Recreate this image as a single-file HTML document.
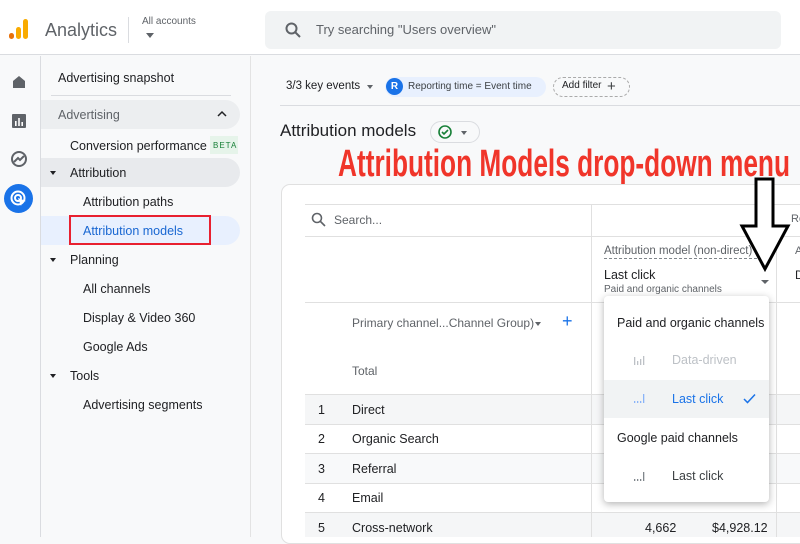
<!DOCTYPE html>
<html><head><meta charset="utf-8"><style>
*{box-sizing:border-box;margin:0;padding:0}
body{width:800px;height:537px;overflow:hidden;background:#f8f9fa;font-family:"Liberation Sans",sans-serif;color:#202124;position:relative}
.a{position:absolute;white-space:nowrap}
.top{position:absolute;left:0;top:0;width:800px;height:55px;background:#fff;border-bottom:1px solid #dadce0}
.rail{position:absolute;left:0;top:56px;width:41px;height:481px;background:#f8f9fa;border-right:1px solid #dadce0}
.side{position:absolute;left:41px;top:56px;width:210px;height:481px;background:#f8f9fa;border-right:1px solid #e3e3e3}
.s{font-size:12.5px;color:#202124}
.card{position:absolute;left:281px;top:184px;width:540px;height:360px;background:#fff;border:1px solid #e0e0e0;border-radius:9px}
.hl{position:absolute;left:305px;width:500px;height:1px;background:#e0e0e0}
.t{font-size:12.5px}
</style></head><body>
<div class="top"></div>
<svg class="a" style="left:9px;top:19px" width="22" height="22"><rect x="0" y="14" width="5" height="6" rx="2.5" fill="#e8710a"/><rect x="7" y="8" width="5" height="12" rx="2.5" fill="#f9ab00"/><rect x="14" y="0" width="5" height="20" rx="2.5" fill="#f9ab00"/></svg>
<div class="a" style="left:45px;top:20px;font-size:18px;color:#5f6368">Analytics</div>
<div class="a" style="left:128px;top:17px;width:1px;height:26px;background:#dadce0"></div>
<div class="a" style="left:142px;top:16px;font-size:10px;color:#5f6368">All accounts</div>
<div class="a" style="left:146px;top:33px;width:0;height:0;border-left:4px solid transparent;border-right:4px solid transparent;border-top:5px solid #5f6368"></div>
<div class="a" style="left:265px;top:11px;width:516px;height:38px;background:#f1f3f4;border-radius:6px"></div>
<svg class="a" style="left:285px;top:22px" width="16" height="16"><circle cx="6.5" cy="6.5" r="5" fill="none" stroke="#5f6368" stroke-width="2"/><line x1="10" y1="10" x2="15" y2="15" stroke="#5f6368" stroke-width="2"/></svg>
<div class="a" style="left:316px;top:22px;font-size:13px;color:#5f6368">Try searching "Users overview"</div>

<div class="rail"></div>
<svg class="a" style="left:11px;top:74px" width="16" height="16"><path d="M2 7 L8 2 L14 7 V14 H2 Z" fill="#5f6368"/></svg>
<svg class="a" style="left:11px;top:113px" width="16" height="16"><rect x="1" y="1" width="14" height="14" rx="1" fill="#5f6368"/><rect x="4" y="8" width="1.6" height="5" fill="#fff"/><rect x="7.2" y="5" width="1.6" height="8" fill="#fff"/><rect x="10.4" y="9" width="1.6" height="4" fill="#fff"/></svg>
<svg class="a" style="left:10px;top:150px" width="18" height="18"><circle cx="9" cy="9" r="7" fill="none" stroke="#5f6368" stroke-width="2"/><path d="M4 12 L8 8 L10 10 L14 6" fill="none" stroke="#5f6368" stroke-width="2"/></svg>
<div class="a" style="left:4px;top:184px;width:29px;height:29px;border-radius:50%;background:#1a73e8"></div>
<svg class="a" style="left:9px;top:189px" width="19" height="19"><circle cx="9" cy="9" r="6.5" fill="none" stroke="#fff" stroke-width="2"/><circle cx="9" cy="9" r="3" fill="none" stroke="#fff" stroke-width="2"/><path d="M9 9 L17 12 L13 13 L12 17 Z" fill="#fff"/></svg>

<div class="side"></div>
<div class="a s" style="left:58px;top:71px">Advertising snapshot</div>
<div class="a" style="left:51px;top:95px;width:180px;height:1px;background:#dadce0"></div>
<div class="a" style="left:41px;top:100px;width:199px;height:29px;background:#eceef0;border-radius:0 15px 15px 0"></div>
<div class="a s" style="left:58px;top:108px;color:#5f6368">Advertising</div>
<svg class="a" style="left:217px;top:110px" width="10" height="8"><path d="M1 6 L5 2 L9 6" fill="none" stroke="#202124" stroke-width="1.5"/></svg>
<div class="a s" style="left:70px;top:139px">Conversion performance</div>
<div class="a" style="left:210px;top:136px;width:28px;height:18px;background:#e6f4ea;color:#188038;font-size:8px;letter-spacing:1px;padding:5px 0 0 3px">BETA</div>
<div class="a" style="left:41px;top:158px;width:199px;height:29px;background:#e8eaed;border-radius:0 15px 15px 0"></div>
<div class="a" style="left:50px;top:171px;border-left:3px solid transparent;border-right:3px solid transparent;border-top:4px solid #202124"></div>
<div class="a s" style="left:70px;top:166px">Attribution</div>
<div class="a s" style="left:83px;top:195px">Attribution paths</div>
<div class="a" style="left:41px;top:216px;width:199px;height:29px;background:#e8f0fe;border-radius:0 15px 15px 0"></div>
<div class="a" style="left:69px;top:215px;width:142px;height:30px;border:2px solid #e8202f"></div>
<div class="a s" style="left:83px;top:224px;color:#1967d2">Attribution models</div>
<div class="a" style="left:50px;top:258px;border-left:3px solid transparent;border-right:3px solid transparent;border-top:4px solid #202124"></div>
<div class="a s" style="left:70px;top:253px">Planning</div>
<div class="a s" style="left:83px;top:282px">All channels</div>
<div class="a s" style="left:83px;top:311px">Display &amp; Video 360</div>
<div class="a s" style="left:83px;top:340px">Google Ads</div>
<div class="a" style="left:50px;top:374px;border-left:3px solid transparent;border-right:3px solid transparent;border-top:4px solid #202124"></div>
<div class="a s" style="left:70px;top:369px">Tools</div>
<div class="a s" style="left:83px;top:398px">Advertising segments</div>

<div class="a" style="left:286px;top:80px;font-size:11.5px">3/3 key events</div>
<div class="a" style="left:367px;top:85px;border-left:3px solid transparent;border-right:3px solid transparent;border-top:4px solid #5f6368"></div>
<div class="a" style="left:385px;top:77px;width:161px;height:20px;background:#e8f0fe;border-radius:10px"></div>
<div class="a" style="left:386px;top:78px;width:17px;height:17px;border-radius:50%;background:#1a73e8;color:#fff;font-size:10px;font-weight:bold;text-align:center;line-height:17px">R</div>
<div class="a" style="left:408px;top:81px;font-size:10px;color:#3c4043">Reporting time = Event time</div>
<div class="a" style="left:553px;top:77px;width:77px;height:20px;border:1px dashed #aaa;border-radius:10px"></div>
<div class="a" style="left:562px;top:80px;font-size:10px">Add filter</div>
<div class="a" style="left:607px;top:78px;font-size:15px;color:#3c4043">+</div>
<div class="a" style="left:280px;top:105px;width:520px;height:1px;background:#dadce0"></div>

<div class="a" style="left:280px;top:121px;font-size:17px">Attribution models</div>
<div class="a" style="left:430px;top:121px;width:50px;height:22px;border:1px solid #dadce0;border-radius:11px"></div>
<svg class="a" style="left:437px;top:124px" width="16" height="16"><circle cx="8" cy="8" r="6" fill="none" stroke="#188038" stroke-width="1.6"/><path d="M5 8 L7 10 L11 6" fill="none" stroke="#188038" stroke-width="1.6"/></svg>
<div class="a" style="left:461px;top:131px;border-left:3px solid transparent;border-right:3px solid transparent;border-top:4px solid #5f6368"></div>

<div class="card"></div>
<div class="hl" style="top:204px;width:500px"></div>
<div class="hl" style="top:236px"></div>
<div class="hl" style="top:302px"></div>
<div class="a" style="left:591px;top:204px;width:1px;height:333px;background:#e0e0e0"></div>
<div class="a" style="left:776px;top:236px;width:1px;height:301px;background:#e0e0e0"></div>
<svg class="a" style="left:311px;top:212px" width="15" height="15"><circle cx="6" cy="6" r="4.5" fill="none" stroke="#5f6368" stroke-width="1.6"/><line x1="9.5" y1="9.5" x2="14" y2="14" stroke="#5f6368" stroke-width="1.6"/></svg>
<div class="a" style="left:334px;top:213px;font-size:12px;color:#5f6368">Search...</div>
<div class="a" style="left:791px;top:213px;font-size:11px;color:#5f6368">Ro</div>
<div class="a" style="left:604px;top:245px;font-size:11.5px;color:#5f6368;border-bottom:1px dashed #80868b;width:158px;overflow:hidden;padding-bottom:1px">Attribution model (non-direct)</div>
<div class="a" style="left:795px;top:245px;font-size:11px;color:#5f6368">A</div>
<div class="a" style="left:604px;top:268px;font-size:12.5px">Last click</div>
<div class="a" style="left:795px;top:268px;font-size:12px">D</div>
<div class="a" style="left:604px;top:284px;font-size:10px;color:#5f6368">Paid and organic channels</div>
<div class="a" style="left:761px;top:280px;border-left:4px solid transparent;border-right:4px solid transparent;border-top:4px solid #5f6368"></div>

<div class="a" style="left:352px;top:316px;font-size:12px;color:#5f6368">Primary channel...Channel Group)</div>
<div class="a" style="left:535px;top:322px;border-left:3px solid transparent;border-right:3px solid transparent;border-top:4px solid #5f6368"></div>
<div class="a" style="left:562px;top:311px;font-size:18px;color:#1a73e8">+</div>
<div class="a" style="left:352px;top:364px;font-size:12px;color:#5f6368">Total</div>

<div class="a" style="left:305px;top:394px;width:500px;height:30px;background:#f5f6f7;border-top:1px solid #e0e0e0"></div>
<div class="a" style="left:305px;top:424px;width:500px;height:29px;background:#fff;border-top:1px solid #e0e0e0"></div>
<div class="a" style="left:305px;top:453px;width:500px;height:30px;background:#f8f9fa;border-top:1px solid #e0e0e0"></div>
<div class="a" style="left:305px;top:483px;width:500px;height:29px;background:#fff;border-top:1px solid #e0e0e0"></div>
<div class="a" style="left:305px;top:512px;width:500px;height:25px;background:#f5f6f7;border-top:1px solid #e0e0e0"></div>
<div class="a" style="left:591px;top:394px;width:1px;height:143px;background:#e0e0e0"></div>
<div class="a" style="left:776px;top:394px;width:1px;height:143px;background:#e0e0e0"></div>
<div class="a t" style="left:318px;top:403px">1</div><div class="a t" style="left:352px;top:403px">Direct</div>
<div class="a t" style="left:318px;top:432px">2</div><div class="a t" style="left:352px;top:432px">Organic Search</div>
<div class="a t" style="left:318px;top:462px">3</div><div class="a t" style="left:352px;top:462px">Referral</div>
<div class="a t" style="left:318px;top:491px">4</div><div class="a t" style="left:352px;top:491px">Email</div>
<div class="a t" style="left:318px;top:521px">5</div><div class="a t" style="left:352px;top:521px">Cross-network</div>
<div class="a t" style="left:645px;top:521px">4,662</div>
<div class="a t" style="left:712px;top:521px">$4,928.12</div>

<div class="a" style="left:604px;top:296px;width:165px;height:206px;background:#fff;border-radius:4px;box-shadow:0 2px 8px rgba(0,0,0,.3)"></div>
<div class="a" style="left:617px;top:316px;font-size:12.5px">Paid and organic channels</div>
<svg class="a" style="left:633px;top:354px" width="14" height="12"><g fill="#bdc1c6"><rect x="1" y="3" width="1.3" height="8"/><rect x="4" y="7" width="1.3" height="4"/><rect x="7" y="5" width="1.3" height="6"/><rect x="10" y="2" width="1.3" height="9"/></g></svg>
<div class="a" style="left:672px;top:353px;font-size:12.5px;color:#bdc1c6">Data-driven</div>
<div class="a" style="left:604px;top:380px;width:165px;height:38px;background:#f1f3f4"></div>
<svg class="a" style="left:633px;top:392px" width="14" height="12"><g fill="#8ab4f8"><rect x="1" y="9" width="1.3" height="2"/><rect x="4" y="9" width="1.3" height="2"/><rect x="7" y="9" width="1.3" height="2"/><rect x="10" y="2" width="1.3" height="9"/></g></svg>
<div class="a" style="left:672px;top:392px;font-size:12.5px;color:#1a73e8">Last click</div>
<svg class="a" style="left:743px;top:393px" width="13" height="11"><path d="M1 6 L4.5 9.5 L12 1.5" fill="none" stroke="#1a73e8" stroke-width="1.5"/></svg>
<div class="a" style="left:617px;top:431px;font-size:12.5px">Google paid channels</div>
<svg class="a" style="left:633px;top:470px" width="14" height="12"><g fill="#80868b"><rect x="1" y="9" width="1.3" height="2"/><rect x="4" y="9" width="1.3" height="2"/><rect x="7" y="9" width="1.3" height="2"/><rect x="10" y="2" width="1.3" height="9"/></g></svg>
<div class="a" style="left:672px;top:469px;font-size:12.5px;color:#3c4043">Last click</div>

<svg class="a" style="left:0;top:0" width="800" height="537">
<text x="338" y="176" font-family="Liberation Sans Narrow, Liberation Sans, sans-serif" font-weight="bold" font-size="38" fill="#f0352a" textLength="452" lengthAdjust="spacingAndGlyphs">Attribution Models drop-down menu</text>
<path d="M756 179 H773 V226 H788 L765 269 L742 226 H756 Z" fill="#fff" stroke="#000" stroke-width="3" stroke-linejoin="miter"/>
</svg>
</body></html>
